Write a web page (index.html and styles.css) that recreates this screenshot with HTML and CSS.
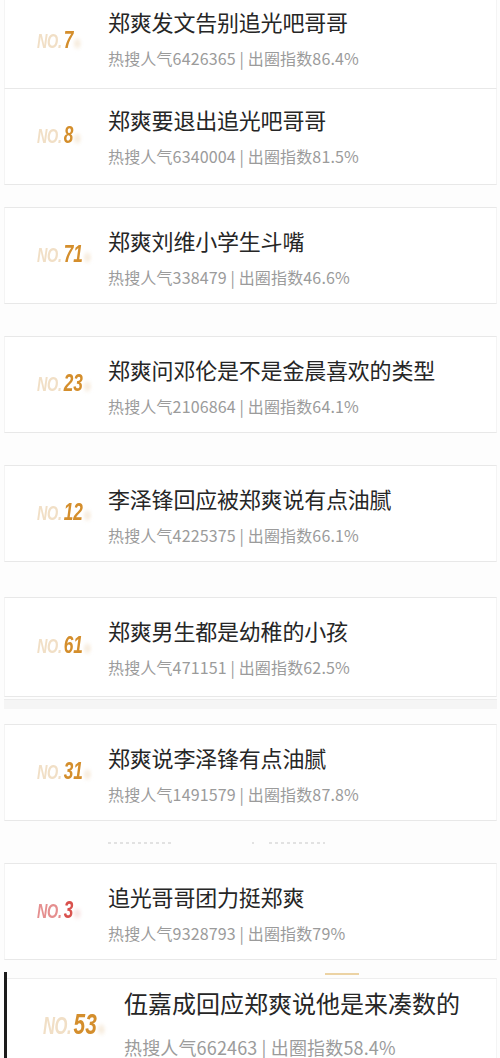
FILE: index.html
```html
<!DOCTYPE html>
<html lang="zh-CN">
<head>
<meta charset="utf-8">
<title>热搜</title>
<link rel="stylesheet" href="styles.css">
</head>
<body>
<div class="list">
  <div class="card card-first">
    <div class="rank"><span class="rank-text"><span class="no">NO.</span><span class="num">7</span></span></div>
    <div class="info">
      <div class="title">郑爽发文告别追光吧哥哥</div>
      <div class="meta">热搜人气6426365 | 出圈指数86.4%</div>
    </div>
  </div>
  <div class="card card-second">
    <div class="rank"><span class="rank-text"><span class="no">NO.</span><span class="num">8</span></span></div>
    <div class="info">
      <div class="title">郑爽要退出追光吧哥哥</div>
      <div class="meta">热搜人气6340004 | 出圈指数81.5%</div>
    </div>
  </div>
  <div class="gap gap-22"></div>
  <div class="card">
    <div class="rank"><span class="rank-text"><span class="no">NO.</span><span class="num">71</span></span></div>
    <div class="info">
      <div class="title">郑爽刘维小学生斗嘴</div>
      <div class="meta">热搜人气338479 | 出圈指数46.6%</div>
    </div>
  </div>
  <div class="gap gap-32"></div>
  <div class="card">
    <div class="rank"><span class="rank-text"><span class="no">NO.</span><span class="num">23</span></span></div>
    <div class="info">
      <div class="title">郑爽问邓伦是不是金晨喜欢的类型</div>
      <div class="meta">热搜人气2106864 | 出圈指数64.1%</div>
    </div>
  </div>
  <div class="gap gap-32"></div>
  <div class="card">
    <div class="rank"><span class="rank-text"><span class="no">NO.</span><span class="num">12</span></span></div>
    <div class="info">
      <div class="title">李泽锋回应被郑爽说有点油腻</div>
      <div class="meta">热搜人气4225375 | 出圈指数66.1%</div>
    </div>
  </div>
  <div class="gap gap-35"></div>
  <div class="card card-tall">
    <div class="rank"><span class="rank-text"><span class="no">NO.</span><span class="num">61</span></span></div>
    <div class="info">
      <div class="title">郑爽男生都是幼稚的小孩</div>
      <div class="meta">热搜人气471151 | 出圈指数62.5%</div>
    </div>
  </div>
  <div class="gap gap-band"><div class="band"></div></div>
  <div class="card">
    <div class="rank"><span class="rank-text"><span class="no">NO.</span><span class="num">31</span></span></div>
    <div class="info">
      <div class="title">郑爽说李泽锋有点油腻</div>
      <div class="meta">热搜人气1491579 | 出圈指数87.8%</div>
    </div>
  </div>
  <div class="gap gap-strip">
    <div class="frag frag-a"></div>
    <div class="frag frag-b"></div>
    <div class="frag frag-c"></div>
  </div>
  <div class="card">
    <div class="rank rank-red"><span class="rank-text"><span class="no">NO.</span><span class="num">3</span></span></div>
    <div class="info">
      <div class="title">追光哥哥团力挺郑爽</div>
      <div class="meta">热搜人气9328793 | 出圈指数79%</div>
    </div>
  </div>
  <div class="gap gap-13"></div>
  <div class="last">
    <div class="gold-line"></div>
    <div class="card card-big">
      <div class="rank"><span class="rank-text"><span class="no">NO.</span><span class="num">53</span></span></div>
      <div class="info">
        <div class="title">伍嘉成回应郑爽说他是来凑数的</div>
        <div class="meta">热搜人气662463 | 出圈指数58.4%</div>
      </div>
    </div>
  </div>
</div>
</body>
</html>
```

FILE: styles.css
```css
* { box-sizing: border-box; }
html, body {
  margin: 0;
  padding: 0;
  background: #fdfdfd;
  height: 1058px;
  overflow: hidden;
}
body {
  font-family: "Noto Sans CJK SC", "Noto Sans", sans-serif;
}
.list {
  margin: 0 3px 0 4px;
  display: flex;
  flex-direction: column;
}
.card {
  display: flex;
  height: 97px;
  background: #fff;
  border-top: 1px solid #e8e8e8;
  border-bottom: 1px solid #e8e8e8;
  border-left: 1px solid #f4f4f4;
  border-right: 1px solid #f4f4f4;
}
.card-first {
  height: 88px;
  border-top: none;
  border-bottom: none;
}
.card-first .info { padding-top: 6px; }
.card-first .rank { padding-bottom: 8px; }
.card-second .info { padding-top: 15px; }
.card-tall { height: 100px; }
.rank {
  width: 103px;
  flex: none;
  display: flex;
  align-items: center;
  padding-left: 32px;
  padding-bottom: 4px;
  font-family: "Liberation Sans", "DejaVu Sans", sans-serif;
  font-style: italic;
  font-weight: bold;
  white-space: nowrap;
}
.rank-text {
  display: inline-block;
  transform: scaleX(0.72);
  transform-origin: left center;
}
.no {
  font-size: 20px;
  color: #f1dfc6;
  letter-spacing: -0.5px;
}
.num {
  font-size: 24px;
  color: #d48e2c;
  margin-left: 3px;
}
.num::after {
  content: "";
  display: inline-block;
  width: 10px;
  height: 9px;
  border-radius: 50%;
  background: #f7eddf;
  filter: blur(2px);
  margin-left: 1px;
}
.rank-red .no { color: #e58f8f; }
.rank-red .num { color: #d9514d; }
.rank-red .num::after { background: #f8e6e6; }
.info {
  padding-top: 17px;
  min-width: 0;
}
.title {
  font-size: 22px;
  line-height: 30px;
  letter-spacing: -0.2px;
  color: #262626;
  white-space: nowrap;
}
.meta {
  margin-top: 10px;
  font-size: 16px;
  line-height: 24px;
  letter-spacing: 0.15px;
  color: #9b9b9b;
  white-space: nowrap;
}
.gap { flex: none; }
.gap-22 { height: 22px; }
.gap-32 { height: 32px; }
.gap-35 { height: 35px; }
.gap-13 { height: 12px; }
.gap-band {
  height: 27px;
  padding-top: 2px;
}
.band {
  height: 10px;
  background: #f5f5f5;
  border-top: 1px solid #ececec;
}
.gap-strip {
  height: 42px;
  padding-top: 21px;
  padding-left: 104px;
  display: flex;
  align-items: flex-start;
}
.frag {
  height: 2px;
  background: repeating-linear-gradient(90deg, #e2e2e2 0 3px, transparent 3px 6px);
}
.frag-a { width: 64px; }
.frag-b { width: 2px; margin-left: 80px; }
.frag-c { width: 56px; margin-left: 15px; }
.last {
  border-left: 3px solid #1c1c1c;
  display: flex;
  flex-direction: column;
}
.gold-line {
  height: 2px;
  width: 34px;
  margin-left: 318px;
  margin-top: 1px;
  margin-bottom: 3px;
  background: #ecd3a4;
}
.card-big {
  height: 90px;
  border-bottom: none;
  border-left: none;
  border-top-color: #eeeeee;
}
.card-big .rank {
  width: 117px;
  padding-left: 36px;
  padding-top: 6px;
}
.card-big .no { font-size: 23px; }
.card-big .num { font-size: 29px; }
.card-big .info { padding-top: 8px; }
.card-big .title {
  font-size: 24px;
  line-height: 32px;
  letter-spacing: 0;
}
.card-big .meta {
  margin-top: 15px;
  font-size: 18px;
  line-height: 26px;
}
```
